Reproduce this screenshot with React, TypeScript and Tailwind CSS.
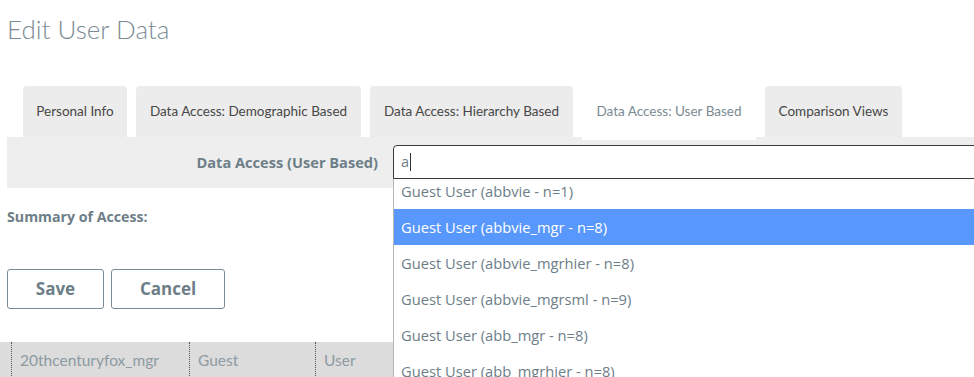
import React from 'react';

const tabs = [
  { label: 'Personal Info', w: 'w-[104px]' },
  { label: 'Data Access: Demographic Based', w: 'w-[225px]' },
  { label: 'Data Access: Hierarchy Based', w: 'w-[203px]' },
  { label: 'Data Access: User Based', w: 'w-[174px]', active: true },
  { label: 'Comparison Views', w: 'w-[137px]' },
];

const options = [
  'Guest User (abbvie - n=1)',
  'Guest User (abbvie_mgr - n=8)',
  'Guest User (abbvie_mgrhier - n=8)',
  'Guest User (abbvie_mgrsml - n=9)',
  'Guest User (abb_mgr - n=8)',
  'Guest User (abb_mgrhier - n=8)',
  'Guest User (abb_mgrsml - n=9)',
];

const bold = "font-['Open_Sans',sans-serif] font-bold";

export default function App() {
  return (
    <div className="relative h-[377px] w-full overflow-hidden bg-white font-['Lato',sans-serif] text-[#6d7e88]">
      <h1 className="pl-[7px] pt-[13px] text-[26px] font-light leading-[32px] text-[#7b8b94]">Edit User Data</h1>

      <div className="ml-[23px] mt-[41px] flex h-[51px] gap-[9px]">
        {tabs.map(t => (
          <div
            key={t.label}
            className={`${t.w} relative flex shrink-0 items-center justify-center rounded-t-[4px] text-[13.5px] ${
              t.active ? 'z-10 h-[54px] bg-white text-[#7b8b94]' : 'bg-[#ececec] text-[#474747]'
            }`}
          >
            <span className={t.active ? '-mt-[3px]' : ''}>{t.label}</span>
          </div>
        ))}
      </div>

      <div className="relative ml-[7px] flex h-[51px] w-[1100px] items-start bg-[#eeeeee] pt-[8px]">
        <div className={`w-[371px] pt-[7px] text-right text-[14.6px] text-[#6d7e88] ${bold}`}>Data Access (User Based)</div>
        <div className="relative ml-[15px] w-[700px]">
          <div className="flex h-[34px] items-center rounded-tl-[4px] border border-[#3a3a3a] bg-white px-[7px] font-['Open_Sans',sans-serif] text-[14.5px] text-[#6d7e88]">
            a<span className="ml-px h-[18px] w-px bg-[#333]" />
          </div>
          <div className="absolute left-0 top-[34px] z-20 h-[260px] w-full overflow-hidden border-l border-[#b5b5b5] bg-white">
            <ul className="-mt-[6px] font-['Open_Sans',sans-serif]">
              {options.map((o, i) => (
                <li
                  key={o}
                  className={`flex h-[36px] items-center px-[7px] text-[14.7px] ${
                    i === 1 ? 'bg-[#5897fb] text-white' : 'text-[#6d7e88]'
                  }`}
                >
                  {o}
                </li>
              ))}
            </ul>
          </div>
        </div>
      </div>

      <div className={`ml-[7px] mt-[19px] text-[14.2px] leading-[20px] text-[#6d7e88] ${bold}`}>Summary of Access:</div>

      <div className="ml-[7px] mt-[42px] flex gap-[7px]">
        <button className={`h-[40px] w-[97px] rounded-[3px] border border-[#7b8b94] text-[17px] text-[#6d7e88] ${bold}`}>Save</button>
        <button className={`h-[40px] w-[114px] rounded-[3px] border border-[#7b8b94] text-[17px] text-[#6d7e88] ${bold}`}>Cancel</button>
      </div>

      <div className="mt-[33px] flex h-[40px] w-[700px] items-center bg-[#dcdcdc] text-[15.5px] text-[#8d9aa2]">
        <div className="ml-[11px] flex h-full w-[178px] items-center border-l border-dotted border-[#555] pb-[2px] pl-[8px]">20thcenturyfox_mgr</div>
        <div className="flex h-full w-[126px] items-center border-l border-dotted border-[#555] pb-[2px] pl-[8px]">Guest</div>
        <div className="flex h-full w-[200px] items-center border-l border-dotted border-[#555] pb-[2px] pl-[8px]">User</div>
      </div>
    </div>
  );
}
